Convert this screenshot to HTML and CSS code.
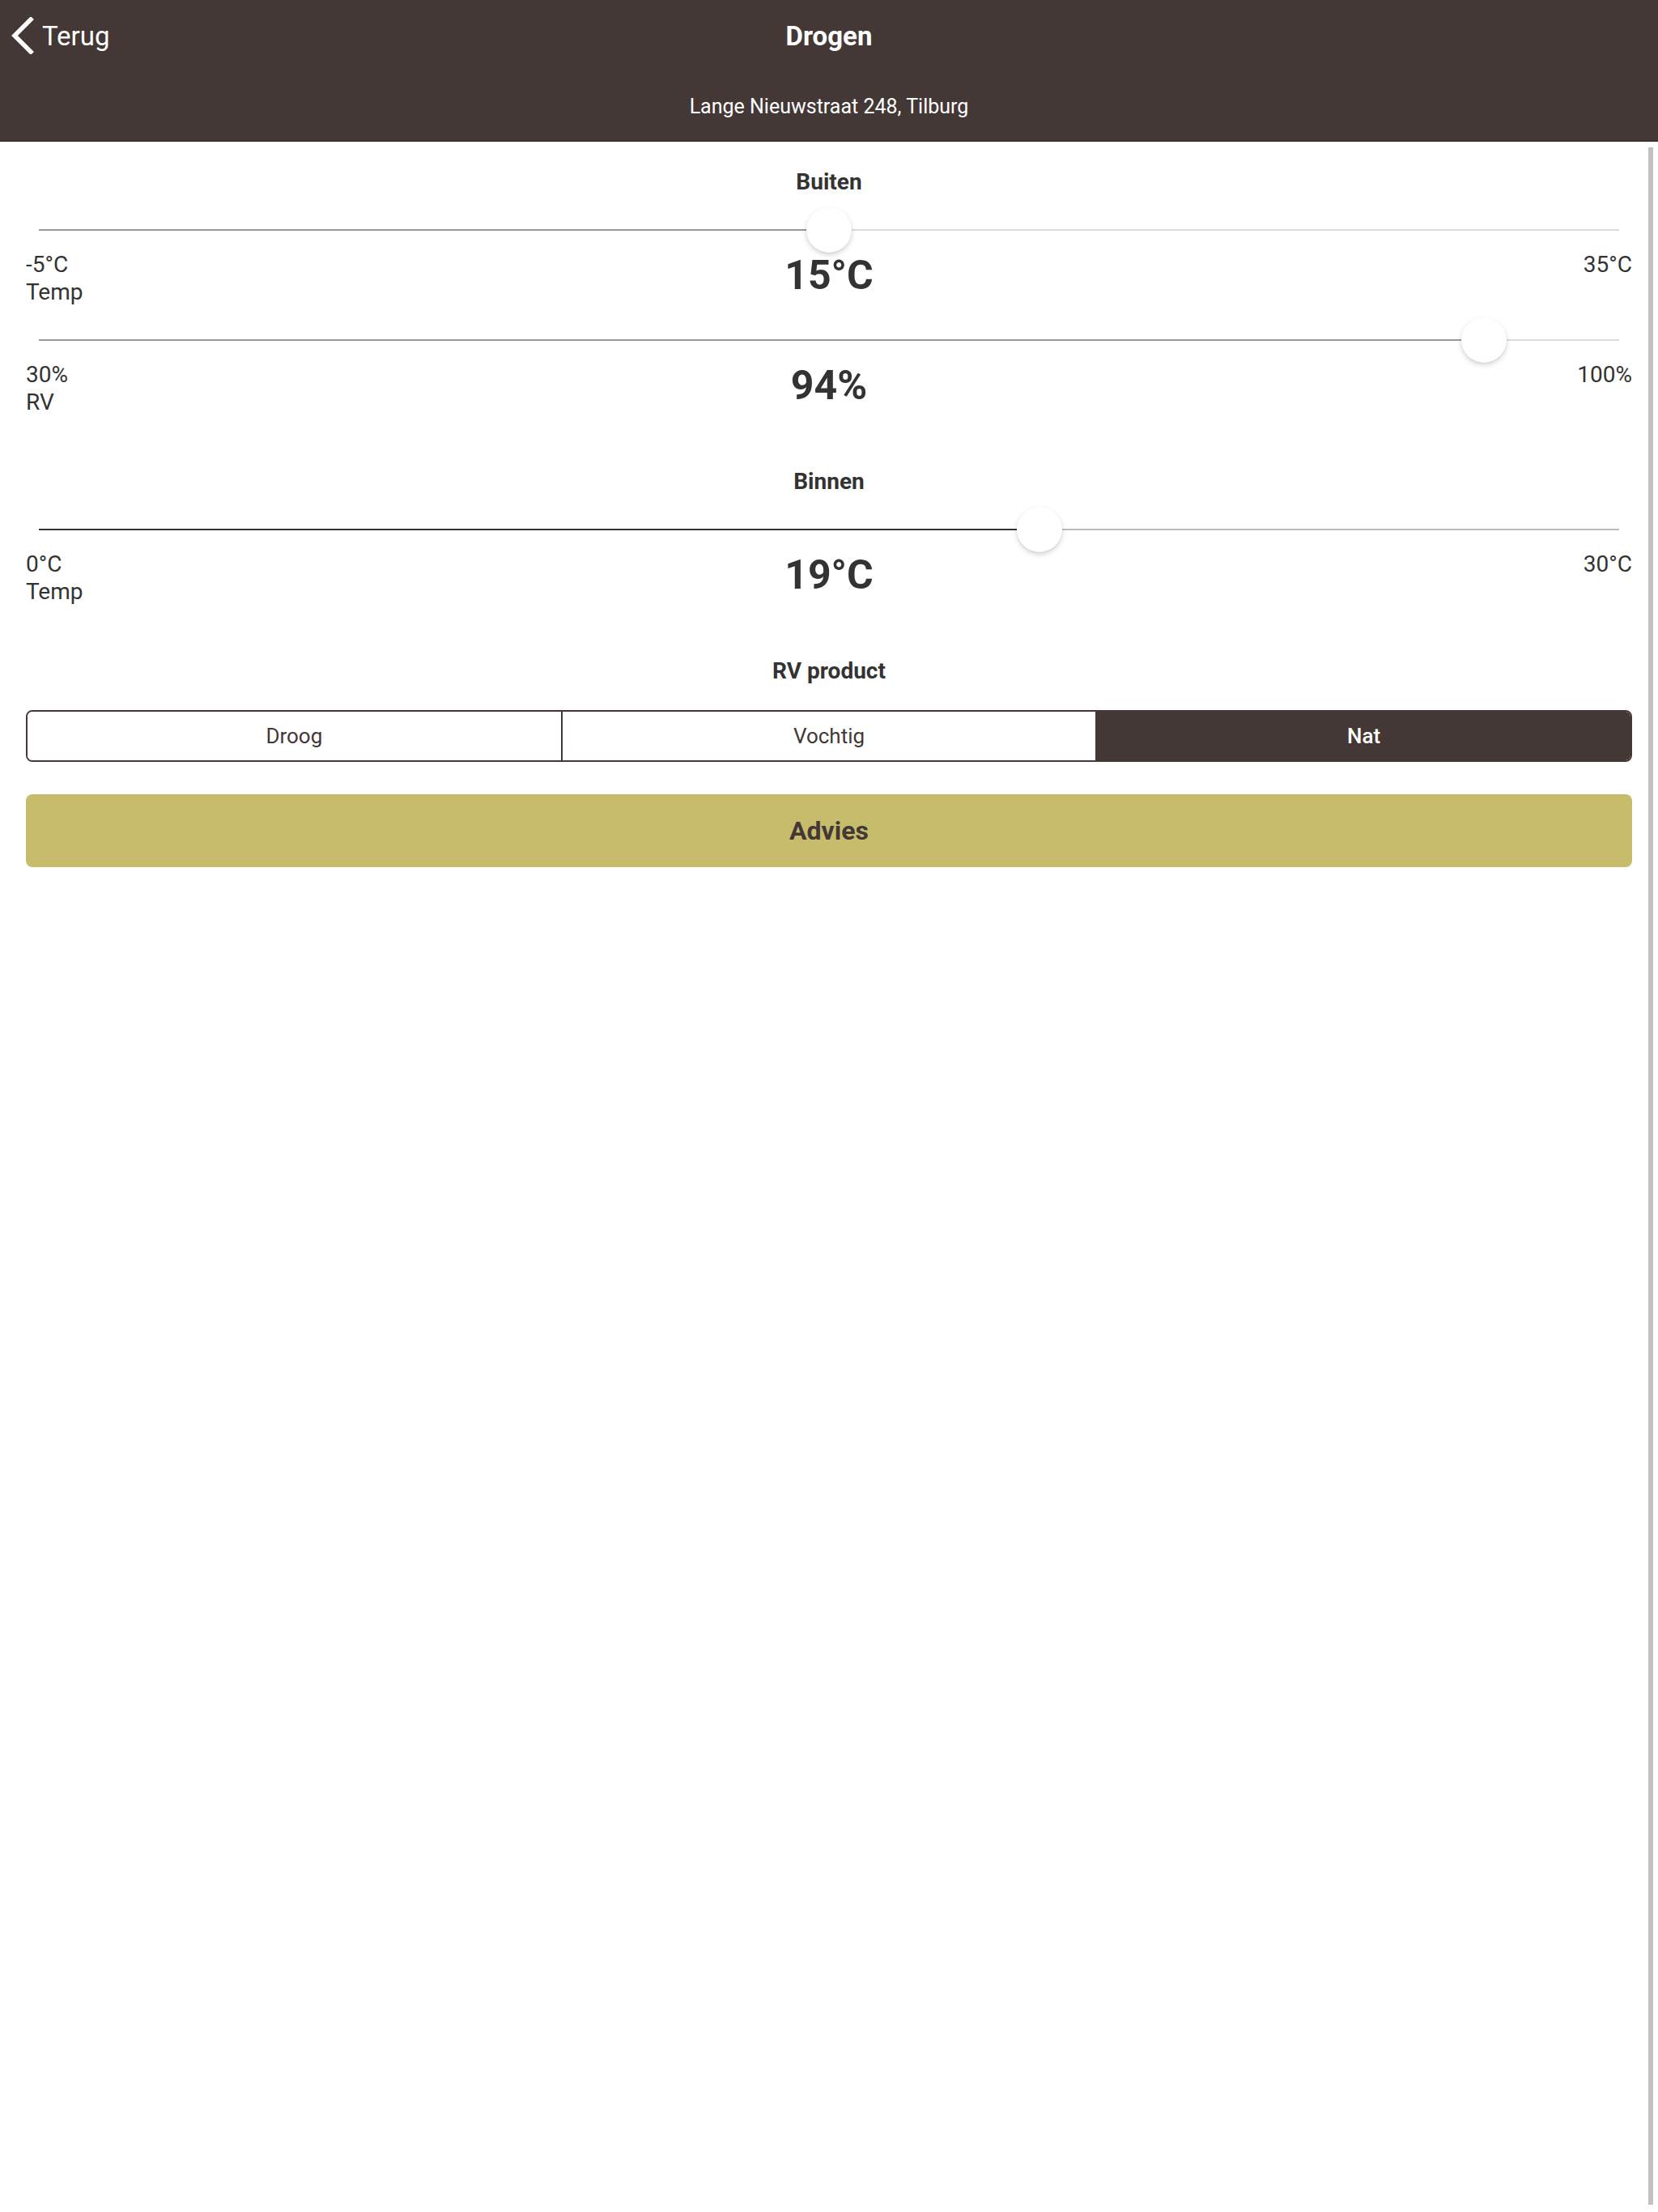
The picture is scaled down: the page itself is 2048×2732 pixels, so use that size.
FILE: index.html
```html
<!DOCTYPE html>
<html lang="nl">
<head>
    <meta charset="UTF-8">
    <meta name="viewport" content="width=device-width, initial-scale=1.0">
    <title>Drogen</title>
    <link rel="stylesheet" href="styles.css">
</head>
<body>

    <!-- Header -->
    <header class="header">
        <div class="toolbar">
            <a class="back-btn" href="#">
                <svg class="back-icon" viewBox="0 0 30 46" width="30" height="46">
                    <path d="M26 3 L6 23 L26 43" fill="none" stroke="#fff" stroke-width="5.5" stroke-linecap="square"/>
                </svg>
                <span>Terug</span>
            </a>
            <h1 class="title">Drogen</h1>
        </div>
        <div class="address">Lange Nieuwstraat 248, Tilburg</div>
    </header>

    <main class="content">

        <!-- Buiten -->
        <h2 class="section-title first">Buiten</h2>

        <div class="range light">
            <div class="track">
                <div class="fill" style="width: 50%"></div>
                <div class="knob" style="left: 50%"></div>
            </div>
        </div>
        <div class="readout">
            <div class="bound">-5°C<br>Temp</div>
            <div class="value">15°C</div>
            <div class="bound right">35°C</div>
        </div>

        <div class="range light">
            <div class="track">
                <div class="fill" style="width: 91.43%"></div>
                <div class="knob" style="left: 91.43%"></div>
            </div>
        </div>
        <div class="readout">
            <div class="bound">30%<br>RV</div>
            <div class="value">94%</div>
            <div class="bound right">100%</div>
        </div>

        <!-- Binnen -->
        <h2 class="section-title">Binnen</h2>

        <div class="range dark">
            <div class="track">
                <div class="fill" style="width: 63.33%"></div>
                <div class="knob" style="left: 63.33%"></div>
            </div>
        </div>
        <div class="readout">
            <div class="bound">0°C<br>Temp</div>
            <div class="value">19°C</div>
            <div class="bound right">30°C</div>
        </div>

        <!-- RV product -->
        <h2 class="section-title">RV product</h2>

        <div class="segment">
            <button class="segment-btn">Droog</button>
            <button class="segment-btn">Vochtig</button>
            <button class="segment-btn active">Nat</button>
        </div>

        <button class="advice-btn">Advies</button>
    </main>

    <!-- Scroll indicator -->
    <div class="scrollbar"></div>

</body>
</html>
```

FILE: styles.css
```css
/* General Reset */
body, html {
    margin: 0;
    padding: 0;
    box-sizing: border-box;
    font-family: Roboto, "Liberation Sans", sans-serif;
    background-color: #fff;
    color: #333;
}

/* Header */
.header {
    background-color: #433836;
    color: white;
    height: 175px;
    border-bottom: 1px solid #2e2624;
    box-sizing: border-box;
}

.toolbar {
    position: relative;
    height: 88px;
    display: flex;
    align-items: center;
    justify-content: center;
}

.back-btn {
    position: absolute;
    left: 12px;
    top: 21px;
    display: flex;
    align-items: center;
    gap: 10px;
    color: white;
    text-decoration: none;
    font-size: 33px;
}

.back-icon {
    display: block;
}

.title {
    margin: 0;
    font-size: 33px;
    font-weight: 700;
}

.address {
    height: 86px;
    display: flex;
    align-items: center;
    justify-content: center;
    font-size: 25px;
}

/* Content */
.content {
    padding: 0 32px;
}

.section-title {
    margin: 64px 0 0;
    font-size: 28px;
    line-height: 34px;
    font-weight: 700;
    text-align: center;
    color: #333;
}

.section-title.first {
    margin-top: 33px;
}

/* Range slider */
.range {
    height: 52px;
    margin-top: 16px;
    padding: 0 16px;
    display: flex;
    align-items: center;
}

.track {
    position: relative;
    width: 100%;
    height: 2px;
}

.fill {
    height: 100%;
}

.range.light .track { background-color: #dcdcdc; }
.range.light .fill { background-color: #9d9797; }
.range.dark .track { background-color: #bdbdbd; }
.range.dark .fill { background-color: #3b3331; }

.knob {
    position: absolute;
    top: 50%;
    width: 56px;
    height: 56px;
    border-radius: 50%;
    background-color: white;
    transform: translate(-50%, -50%);
    box-shadow: 0 3px 6px rgba(0, 0, 0, 0.16), 0 1px 2px rgba(0, 0, 0, 0.06);
}

/* Min / value / max row */
.readout {
    display: grid;
    grid-template-columns: 1fr auto 1fr;
    height: 68px;
}

.bound {
    font-size: 28px;
    line-height: 34px;
    color: #333;
}

.bound.right {
    text-align: right;
}

.value {
    font-size: 50px;
    line-height: 60px;
    font-weight: 700;
    color: #333;
}

/* Segment */
.segment {
    margin-top: 31px;
    display: flex;
    height: 64px;
    border: 2px solid #433836;
    border-radius: 8px;
    overflow: hidden;
    box-sizing: border-box;
}

.segment-btn {
    flex: 1;
    border: none;
    border-left: 2px solid #433836;
    background-color: white;
    color: #433836;
    font-family: inherit;
    font-size: 26px;
    padding: 0;
}

.segment-btn:first-child {
    border-left: none;
}

.segment-btn.active {
    background-color: #433836;
    color: white;
    font-weight: 500;
}

/* Advice button */
.advice-btn {
    display: block;
    width: 100%;
    height: 90px;
    margin-top: 40px;
    border: none;
    border-radius: 8px;
    background-color: #c7bc6c;
    color: #433836;
    font-family: inherit;
    font-size: 32px;
    font-weight: 700;
    cursor: pointer;
}

/* Scroll indicator */
.scrollbar {
    position: fixed;
    top: 182px;
    bottom: 9px;
    right: 6px;
    width: 6px;
    background-color: #c1c1c1;
}
```
